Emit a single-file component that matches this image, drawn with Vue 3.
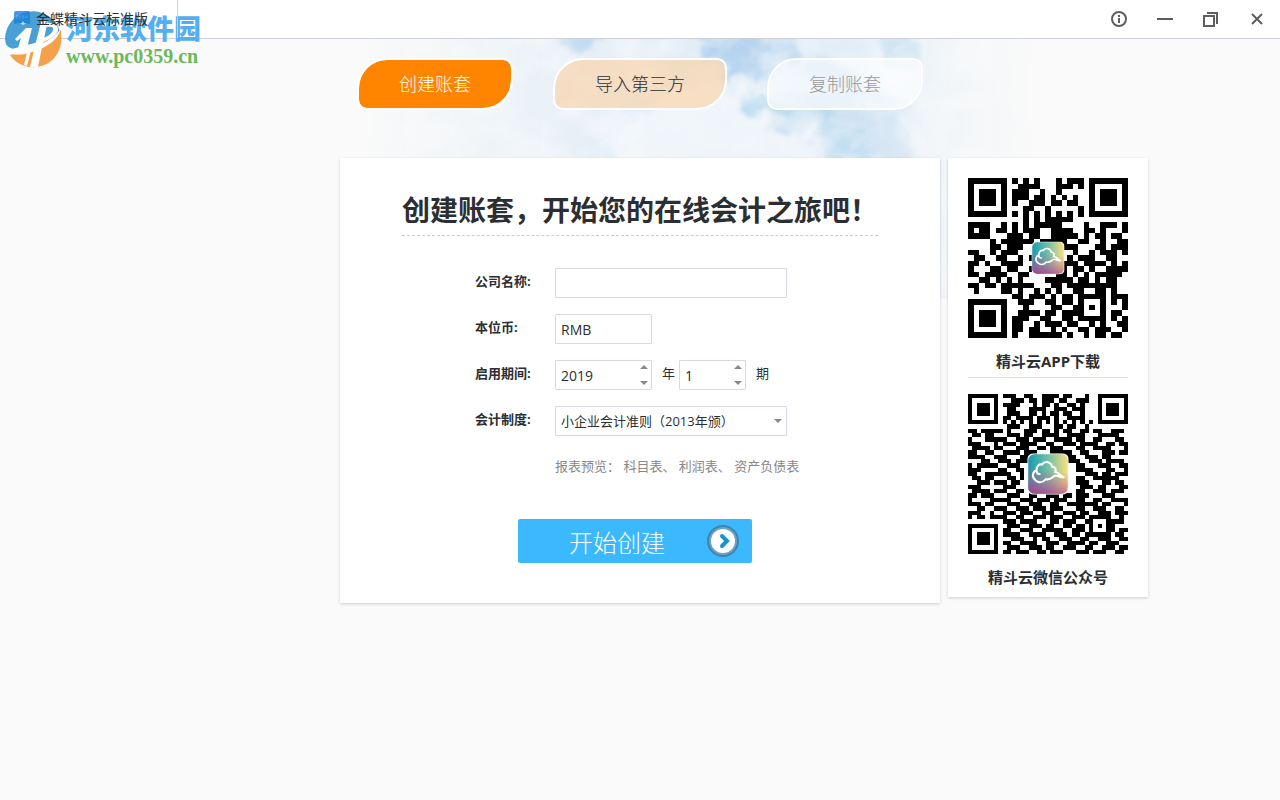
<template>
    <div class="window">
        <header class="titlebar">
            <div class="title-tab">
                <svg class="app-icon" viewBox="0 0 16 16" aria-hidden="true">
                    <path d="M2 0h12a2 2 0 0 1 2 2v11l-5-1-3 2-3-2-5 1V2a2 2 0 0 1 2-2z" fill="#1b7fe0" />
                    <path d="M2 5h3M3 4v4M6 4v4M8 5h2M9 4v4M11 6h3" stroke="#4aa0ec" stroke-width="1" />
                    <path d="M9 10l1 2 2 .5-3 1.500-3-1.500 2-.5z" fill="#eaf5ff" />
                </svg>
                <span>金蝶精斗云标准版</span>
            </div>
            <div class="window-actions">
                <button type="button" aria-label="关于">
                    <svg viewBox="0 0 16 16">
                        <circle cx="8" cy="8" r="7" />
                        <path d="M8 4v2M8 7v5" />
                    </svg>
                </button>
                <button type="button" aria-label="最小化">
                    <svg viewBox="0 0 16 16"><path d="M0 8h16" /></svg>
                </button>
                <button type="button" aria-label="还原">
                    <svg viewBox="0 0 16 16">
                        <path d="M1 5h10v10H1zM4 2h10v11" />
                    </svg>
                </button>
                <button type="button" aria-label="关闭">
                    <svg viewBox="0 0 16 16"><path d="M3 3l10 10M13 3L3 13" /></svg>
                </button>
            </div>
        </header>

        <div class="watermark">
            <svg viewBox="0 0 58 58" aria-hidden="true">
                <path d="M1 29a28 28 0 0 1 54-10l2 7L4 40a28 28 0 0 1-3-11z" fill="#4a9fd4" />
                <path d="M57 26a28 28 0 0 1-51 19l20-5 31-20z" fill="#f5a14b" />
                <path d="M1 33c-2 12 12 14 27 9 14-4 27-13 28-22-7 9-17 14-29 17C14 41 5 40 1 33z" fill="#fff" />
                <path d="M11 29l11-11h6l-5 20h-9l3-10-4 3z" fill="#fff" />
                <path d="M37 12l7-2-4 19-2 8-4 20h-8l5-21z" fill="#fff" />
                <path d="M42 13c8-1 13 3 12 8-2 5-9 9-18 12l1-4c6-2 11-5 12-9 1-3-2-4-7-3z" fill="#fff" />
                <path d="M23 42l-3 13 3 1 4-16z" fill="#fff" />
            </svg>
            <div>
                <strong>河东软件园</strong>
                <span>www.pc0359.cn</span>
            </div>
        </div>

        <div class="stage">
            <svg class="sky" viewBox="0 0 680 260" aria-hidden="true">
                <defs>
                    <linearGradient id="fade">
                        <stop offset="0" stop-color="#fff" stop-opacity="0" />
                        <stop offset=".3" stop-color="#fff" stop-opacity=".75" />
                        <stop offset=".45" stop-color="#fff" />
                        <stop offset=".74" stop-color="#fff" />
                        <stop offset=".87" stop-color="#fff" stop-opacity=".3" />
                        <stop offset="1" stop-color="#fff" stop-opacity="0" />
                    </linearGradient>
                    <mask id="skyMask">
                        <rect width="680" height="260" fill="url(#fade)" />
                    </mask>
                    <filter id="cloudEdge" x="-20%" y="-20%" width="140%" height="140%" color-interpolation-filters="sRGB">
                        <feTurbulence type="fractalNoise" baseFrequency=".04" numOctaves="5" seed="4" />
                        <feDisplacementMap in="SourceGraphic" scale="50" xChannelSelector="R" yChannelSelector="G" />
                        <feGaussianBlur stdDeviation="2" />
                    </filter>
                    <filter id="wisps" color-interpolation-filters="sRGB">
                        <feTurbulence type="fractalNoise" baseFrequency=".02 .028" numOctaves="5" seed="9" />
                        <feColorMatrix values="0 0 0 0 .98  0 0 0 0 .99  0 0 0 0 1  3 0 0 0 -1.100" />
                    </filter>
                </defs>
                <g mask="url(#skyMask)">
                    <rect width="680" height="260" fill="#e2edf6" />
                    <g filter="url(#cloudEdge)">
                        <path d="M190-20h60l-6 30-34 4zM330-20h110l-10 56-40 10-40-30z" fill="#b6d4ee" />
                        <path d="M400 20l70-4 70 50 20 60-110-4-40-50z" fill="#cde1f2" />
                        <path d="M380 50l46 14 60 12 20 46-24-4-22-34-62-10zM510-20h40l4 46-30 4z" fill="#badaee" />
                    </g>
                    <rect width="680" height="260" filter="url(#wisps)" opacity=".45" />
                    <path d="M290 66l50-20 40 10 26 30 54 14 20 44H240z" fill="#f4f8fb" filter="url(#cloudEdge)" opacity=".7" />
                </g>
            </svg>

            <nav class="tabs">
                <button
                    v-for="tab in tabs"
                    :key="tab.name"
                    type="button"
                    :class="['tab', 'tab-' + tab.name, { active: tab.name === current }]"
                    :disabled="tab.disabled"
                    @click="current = tab.name"
                >
                    {{ tab.label }}
                </button>
            </nav>

            <main class="content">
                <section class="card setup">
                    <h1>创建账套，开始您的在线会计之旅吧！</h1>

                    <form @submit.prevent>
                        <div class="row">
                            <label for="company">公司名称:</label>
                            <input id="company" v-model="company" class="wide" type="text">
                        </div>
                        <div class="row">
                            <label for="currency">本位币:</label>
                            <input id="currency" v-model="currency" class="short" type="text">
                        </div>
                        <div class="row">
                            <label for="year">启用期间:</label>
                            <div class="spinner short">
                                <input id="year" v-model.number="year" type="text">
                                <span class="steps">
                                    <button type="button" aria-label="下一年" @click="year++"></button>
                                    <button type="button" aria-label="上一年" class="down" @click="year--"></button>
                                </span>
                            </div>
                            <span class="unit">年</span>
                            <div class="spinner tiny">
                                <input v-model.number="period" type="text" aria-label="期">
                                <span class="steps">
                                    <button type="button" aria-label="下一期" @click="period++"></button>
                                    <button type="button" aria-label="上一期" class="down" @click="period--"></button>
                                </span>
                            </div>
                            <span class="unit last">期</span>
                        </div>
                        <div class="row">
                            <label for="standard">会计制度:</label>
                            <div class="select wide">
                                <select id="standard" v-model="standard">
                                    <option value="2013">小企业会计准则（2013年颁）</option>
                                </select>
                            </div>
                        </div>
                        <p class="preview">
                            报表预览：
                            <a href="#">科目表</a>、
                            <a href="#">利润表</a>、
                            <a href="#">资产负债表</a>
                        </p>

                        <button class="submit" type="submit">
                            <span>开始创建</span>
                            <svg viewBox="0 0 32 32" aria-hidden="true">
                                <circle cx="16" cy="16" r="15" fill="#6ba3c7" stroke="#3f84ad" stroke-width="2" />
                                <circle cx="16" cy="16" r="12" fill="#fff" />
                                <path d="M15 11l5 5-5 5" fill="none" stroke="#1593cf" stroke-width="4" stroke-linecap="round" />
                            </svg>
                        </button>
                    </form>
                </section>

                <aside class="card codes">
                    <figure v-for="code in codes" :key="code.label">
                        <svg :viewBox="`0 0 ${code.rows.length} ${code.rows.length}`" role="img" :aria-label="code.label">
                            <path :d="toPath(code.rows)" shape-rendering="crispEdges" />
                            <svg :x="code.logo.at" :y="code.logo.at" :width="code.logo.size" :height="code.logo.size" viewBox="0 0 40 40">
                                <defs>
                                    <linearGradient :id="code.id" x1="0" y1="0" x2="1" y2="0">
                                        <stop offset="0" stop-color="#159caf" />
                                        <stop offset=".5" stop-color="#6fc0a8" />
                                        <stop offset="1" stop-color="#fbdf7c" />
                                    </linearGradient>
                                    <linearGradient :id="code.id + 'b'" x1=".3" y1="0" x2=".1" y2="1">
                                        <stop offset=".3" stop-color="#d0608a" stop-opacity="0" />
                                        <stop offset="1" stop-color="#b03c8e" stop-opacity=".9" />
                                    </linearGradient>
                                </defs>
                                <rect width="40" height="40" rx="6" fill="#f4f4f4" />
                                <rect x="1" y="1" width="38" height="38" rx="6" :fill="`url(#${code.id})`" />
                                <rect x="1" y="1" width="38" height="38" rx="6" :fill="`url(#${code.id}b)`" />
                                <path
                                    d="M35 23c-4 1-6-3-9-1-3 2-4 4-8 3-3 3-7 4-10 1-4-3-3-8 1-10 0-4 3-6 5-5 3-4 9-3 10 2 3 0 4 2 3 5 3 0 5 4 8 5M9 17c0 2 1 3 3 3"
                                    fill="none"
                                    stroke="#fff"
                                    stroke-width="2"
                                    stroke-linecap="round"
                                />
                            </svg>
                        </svg>
                        <figcaption>{{ code.label }}</figcaption>
                    </figure>
                </aside>
            </main>
        </div>
    </div>
</template>

<script setup>
import { ref } from 'vue';

const tabs = [
    { name: 'create', label: '创建账套' },
    { name: 'import', label: '导入第三方' },
    { name: 'copy', label: '复制账套', disabled: true }
];

const current = ref('create');
const company = ref('');
const currency = ref('RMB');
const year = ref(2019);
const period = ref(1);
const standard = ref('2013');

const appRows = [
    '11111110101010001011101111111',
    '10000010011110001110101000001',
    '10111010111001001000001011101',
    '10111010111011010101001011101',
    '10111010100111011011001011101',
    '10000010001100100000101000001',
    '11111110101010101010101111111',
    '00000000001010111110000000000',
    '11110010101011111000010011101',
    '10110110101110011110011010001',
    '11110001110110011111010110110',
    '00001011111101111100110010011',
    '00001101110011101111000110111',
    '11001011100000000001001011101',
    '01100110010100000010111001100',
    '11010011110000000111011110101',
    '10001101100100000101101001111',
    '11011110011000001101010111110',
    '00110101010000111110110101100',
    '11011011111100011011111111100',
    '01000011010010101001100110100',
    '00000000110111010110111110111',
    '11111110011100110110100010101',
    '10000010001000011001101010001',
    '10111010011110110111100010110',
    '10111010111001100110111110101',
    '10111010110010111011001010011',
    '10000010110110010100110111001',
    '11111110100111111010010110110'
];

const wechatRows = [
    '1111111011100110011110110001001111111',
    '1000001000111011011101100111001000001',
    '1011101011110001011010011010001011101',
    '1011101001100011110011101110001011101',
    '1011101001110011010110110010001011101',
    '1000001011011110111010011110001000001',
    '1111111010101010101010101010101111111',
    '0000000001110011100011011001000000000',
    '1101111101000111011010110011011001110',
    '0110110001110110011110011110001111100',
    '1000111110011101110011110110011000110',
    '1110001011101111001100111011110011011',
    '0111101100011100110111000110011110001',
    '1100110011110111000111110011000111011',
    '1111001110001100000000011001110110000',
    '0001100111011100000000011100111011110',
    '1011111001110000000000000110001110011',
    '1110000110011000000000000111100011001',
    '1100111111001000000000000001110110111',
    '0110110001101000000000000110011111100',
    '0011101110110000000000000111000110110',
    '1110000011100000000000000011101100011',
    '0111101110011000000000000110011101110',
    '1101110001110011001110110111000111000',
    '1000011111001110111011100110011001111',
    '1110110001110011100110011111110110001',
    '0011001110011101110111000110011100110',
    '1110010011101110011100111011001110111',
    '1011011110011001110111001110111110010',
    '0000000011101111000110111001100011110',
    '1111111001110011101100110110101011000',
    '1000001011001110011111001110100011011',
    '1011101011110011110011101101111110110',
    '1011101000111001011001110011001110011',
    '1011101011001111001110011110110011100',
    '1000001001110011101100111001100111011',
    '1111111011011100110111000111011100110'
];

const codes = [
    { id: 'appLogo', label: '精斗云APP下载', rows: appRows, logo: { at: 11.5, size: 6 } },
    { id: 'wxLogo', label: '精斗云微信公众号', rows: wechatRows, logo: { at: 13.7, size: 9.6 } }
];

// one unit square per dark module, neighbours merged into a run
function toPath(rows) {
    return rows
        .map((row, y) => [...row.matchAll(/1+/g)].map(run => `M${run.index} ${y}h${run[0].length}v1h-${run[0].length}z`).join(''))
        .join('');
}
</script>

<style>
body {
    background: #fafafa;
}
</style>

<style scoped>
.window {
    position: relative;
    min-height: 100vh;
    font-family: "Open Sans", "Noto Sans CJK SC", sans-serif;
    font-size: 13px;
    color: #2b2f33;
}

button,
input,
select {
    font: inherit;
    color: inherit;
}

button {
    border: 0;
    padding: 0;
    background: none;
    cursor: pointer;
}

/* ─── Title bar ───────────────────────────────── */
.titlebar {
    display: flex;
    justify-content: space-between;
    height: 38px;
    background: #fff;
    border-bottom: 1px solid #d0d0d8;
}

.title-tab {
    position: relative;
    z-index: 3;
    display: flex;
    align-items: center;
    gap: 6px;
    padding: 0 29px 0 14px;
    border-right: 1px solid #d0d0d8;
    font-size: 14px;
    line-height: 36px;
}

.app-icon {
    width: 16px;
    height: 16px;
    opacity: 0.8;
}

.window-actions {
    display: flex;
    align-items: center;
    gap: 30px;
    padding-right: 15px;
}

.window-actions button,
.window-actions svg {
    display: block;
    width: 16px;
    height: 16px;
}

.window-actions svg {
    fill: none;
    stroke: #5c5e62;
    stroke-width: 2;
}

/* ─── Watermark ───────────────────────────────── */
.watermark {
    position: absolute;
    top: 10px;
    left: 4px;
    z-index: 2;
    display: flex;
    gap: 4px;
    pointer-events: none;
}

.watermark svg {
    width: 58px;
    height: 58px;
}

.watermark strong,
.watermark span {
    display: block;
}

.watermark strong {
    font: 900 27px/36px "Noto Sans CJK SC", sans-serif;
    color: #55aef0;
}

.watermark span {
    font: bold 20px/20px "Liberation Serif", serif;
    color: #6db85c;
}

/* ─── Tabs over the sky ───────────────────────── */
.stage {
    position: relative;
    overflow: hidden;
    padding: 19px 0 40px;
}

.sky {
    position: absolute;
    top: 0;
    left: 50%;
    width: 680px;
    height: 260px;
    margin-left: -280px;
}

.tabs {
    position: relative;
    display: flex;
    justify-content: center;
    gap: 40px;
}

.tab {
    height: 52px;
    padding: 0 40px 2px;
    border: 2px solid #fff;
    border-radius: 30px 10px 30px 10px;
    background: rgba(255, 255, 255, 0.6);
    background-clip: padding-box;
    font-size: 18px;
}

.tab-import {
    background-color: rgba(251, 208, 160, 0.6);
}

.tab.active {
    background-color: #ff8400;
    color: #fff;
}

.tab:disabled {
    color: #999;
    cursor: default;
}

/* ─── Cards ───────────────────────────────────── */
.content {
    position: relative;
    display: grid;
    grid-template-columns: 1fr 600px 1fr;
    align-items: start;
    gap: 8px;
    margin-top: 48px;
}

.card {
    background: #fff;
    box-shadow: 0 1px 3px rgba(0, 0, 0, 0.18);
}

.setup {
    grid-column: 2;
    padding: 32px 62px 40px;
}

h1 {
    margin: 0 0 32px;
    padding-bottom: 5px;
    border-bottom: 1px dashed #ccc;
    font-size: 28px;
    line-height: 40px;
    white-space: nowrap;
}

form {
    width: 330px;
    margin: 0 auto;
}

.row {
    display: flex;
    margin-bottom: 16px;
}

label {
    width: 80px;
    font-weight: bold;
    line-height: 26px;
}

.row input,
.row select {
    box-sizing: border-box;
    height: 30px;
    padding: 0 5px;
    border: 1px solid #d7d9e3;
    border-radius: 1px;
    background: #fff;
    outline: none;
}

.row input {
    font-size: 14px;
}

.row .wide {
    width: 232px;
}

.row .short {
    width: 97px;
}

.row .tiny {
    width: 67px;
}

.spinner,
.select {
    position: relative;
}

.spinner input,
.select select {
    width: 100%;
}

.steps {
    position: absolute;
    top: 1px;
    right: 1px;
    bottom: 1px;
    display: flex;
    flex-direction: column;
    justify-content: space-between;
    width: 14px;
}

.steps button {
    display: flex;
    align-items: center;
    justify-content: center;
    height: 12px;
}

.steps button::before,
.select::after {
    content: "";
    border: 4px solid transparent;
    border-top-width: 0;
    border-bottom-color: #888;
}

.steps .down::before,
.select::after {
    border-width: 4px 4px 0;
    border-top-color: #888;
}

.select select {
    appearance: none;
}

.select::after {
    position: absolute;
    top: 13px;
    right: 5px;
    pointer-events: none;
}

.unit {
    margin: 0 4px 0 10px;
    line-height: 26px;
}

.unit.last {
    margin-right: 0;
}

.preview {
    margin: 0 0 0 80px;
    line-height: 28px;
    color: #888;
    white-space: nowrap;
}

.preview a {
    color: inherit;
    text-decoration: none;
}

.submit {
    display: flex;
    align-items: center;
    justify-content: space-between;
    width: 234px;
    height: 44px;
    margin: 39px 0 0 43px;
    padding: 0 13px 0 51px;
    border-radius: 2px;
    background: #3cb8ff;
    color: #fff;
    font-size: 24px;
}

.submit svg {
    width: 32px;
    height: 32px;
}

.tab,
.submit {
    font-family: "Noto Sans CJK SC", sans-serif;
    font-weight: 300;
}

/* ─── QR codes ────────────────────────────────── */
.codes {
    width: 160px;
    padding: 20px 20px 4px;
}

figure {
    margin: 0;
    text-align: center;
}

figure + figure {
    margin-top: 16px;
}

figure > svg {
    display: block;
    width: 160px;
    height: 160px;
}

figcaption {
    padding: 8px 0 0;
    font-size: 15px;
    font-weight: bold;
    line-height: 31px;
}

figure:first-child figcaption {
    border-bottom: 1px solid #e2e2e2;
}
</style>
